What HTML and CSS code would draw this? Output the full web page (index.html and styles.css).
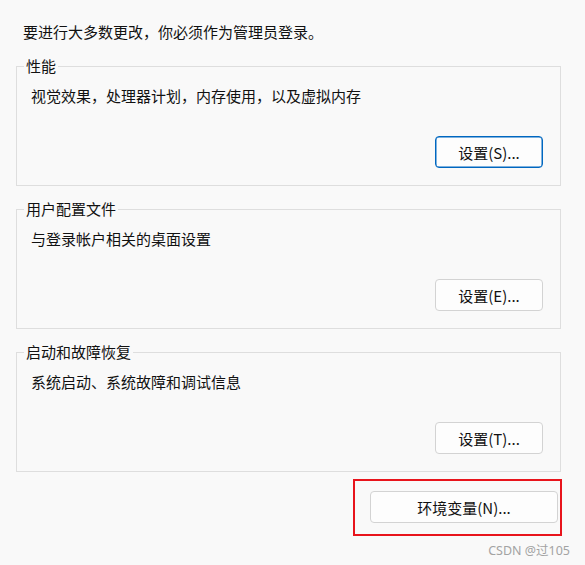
FILE: index.html
```html
<!DOCTYPE html>
<html lang="zh-CN">

<head>
    <meta charset="UTF-8">
    <meta name="viewport" content="width=device-width, initial-scale=1.0">
    <title>系统属性 - 高级</title>

    <link rel="stylesheet" href="styles.css">
</head>

<body>
    <div class="page">
        <p class="notice">要进行大多数更改，你必须作为管理员登录。</p>

        <fieldset class="group">
            <legend>性能</legend>
            <p class="desc">视觉效果，处理器计划，内存使用，以及虚拟内存</p>
            <div class="actions">
                <button class="btn btn-default">设置(S)...</button>
            </div>
        </fieldset>

        <fieldset class="group">
            <legend>用户配置文件</legend>
            <p class="desc">与登录帐户相关的桌面设置</p>
            <div class="actions">
                <button class="btn">设置(E)...</button>
            </div>
        </fieldset>

        <fieldset class="group">
            <legend>启动和故障恢复</legend>
            <p class="desc">系统启动、系统故障和调试信息</p>
            <div class="actions">
                <button class="btn">设置(T)...</button>
            </div>
        </fieldset>

        <div class="footer">
            <div class="highlight">
                <button class="btn btn-wide">环境变量(N)...</button>
            </div>
        </div>

        <div class="watermark">CSDN @过105</div>
    </div>
</body>

</html>
```

FILE: styles.css
```css
* {
    box-sizing: border-box;
}

body {
    margin: 0;
    background-color: #f9f9f9;
    color: #111;
    font-family: "Noto Sans CJK SC", "Noto Sans", sans-serif;
    font-size: 15px;
    line-height: 20px;
}

.page {
    padding: 22px 24px 0 16px;
}

.notice {
    margin: 0 0 14px 7px;
}

.group {
    margin: 0 0 13px 0;
    padding: 10px 17px 17px 7px;
    border: 1px solid #dedede;
}

.group legend {
    padding: 0 2px;
    line-height: 20px;
}

.desc {
    margin: 0 0 0 7px;
}

.actions {
    display: flex;
    justify-content: flex-end;
    margin-top: 30px;
}

.btn {
    width: 108px;
    height: 32px;
    padding: 0;
    border: 1px solid #d3d3d3;
    border-radius: 4px;
    background-color: #fdfdfd;
    color: #111;
    font-family: inherit;
    font-size: 15px;
}

.btn-default {
    border-color: #0067c0;
    box-shadow: inset 0 0 0 0.5px #0067c0;
}

.btn-wide {
    width: 188px;
}

.footer {
    display: flex;
    justify-content: flex-end;
    margin: -6px -1px 0 0;
}

.highlight {
    padding: 10px 2px 11px 15px;
    border: 2px solid #e8141c;
}

.watermark {
    margin: 6px -9px 0 0;
    text-align: right;
    color: #a3a3a3;
    font-family: "Noto Sans", "Noto Sans CJK SC", sans-serif;
    font-size: 12.5px;
    line-height: 18px;
}
```
